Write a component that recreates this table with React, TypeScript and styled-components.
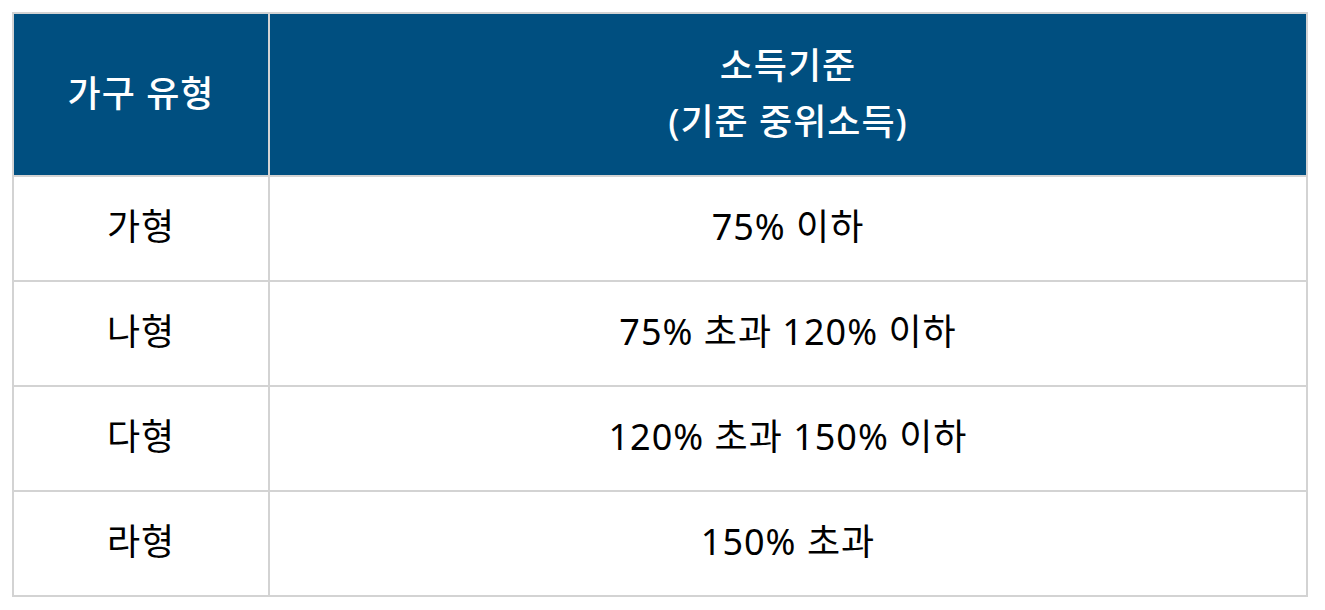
import React from 'react';
import styled, { createGlobalStyle } from 'styled-components';

const GlobalStyle = createGlobalStyle`
  html, body {
    margin: 0;
    padding: 0;
    background: #ffffff;
  }
  body {
    font-family: "Noto Sans", "Noto Sans CJK KR", sans-serif;
  }
`;

const Page = styled.div`
  padding: 12px 0 0 12px;
`;

const Table = styled.table`
  width: 1296px;
  border-collapse: collapse;
  table-layout: fixed;
  border: 2px solid #d3d3d3;
`;

const HeadCell = styled.th<{ width?: string }>`
  ${({ width }) => (width ? `width: ${width};` : '')}
  height: 159px;
  padding: 0 0 2px;
  background-color: #004f80;
  border: 2px solid #d3d3d3;
  color: #ffffff;
  font-size: 36px;
  font-weight: 500;
  letter-spacing: 1px;
  line-height: 56px;
  text-align: center;
  vertical-align: middle;
`;

const Cell = styled.td`
  height: 99px;
  padding: 0 0 4px;
  border: 2px solid #d3d3d3;
  color: #000000;
  font-size: 36px;
  font-weight: 400;
  letter-spacing: 1px;
  line-height: 48px;
  text-align: center;
  vertical-align: middle;
`;

const rows = [
  { type: '가형', income: '75% 이하' },
  { type: '나형', income: '75% 초과 120% 이하' },
  { type: '다형', income: '120% 초과 150% 이하' },
  { type: '라형', income: '150% 초과' },
];

const App: React.FC = () => (
  <Page>
    <GlobalStyle />
    <Table>
      <thead>
        <tr>
          <HeadCell width="254px">가구 유형</HeadCell>
          <HeadCell>
            소득기준
            <br />
            (기준 중위소득)
          </HeadCell>
        </tr>
      </thead>
      <tbody>
        {rows.map((row) => (
          <tr key={row.type}>
            <Cell>{row.type}</Cell>
            <Cell>{row.income}</Cell>
          </tr>
        ))}
      </tbody>
    </Table>
  </Page>
);

export default App;
